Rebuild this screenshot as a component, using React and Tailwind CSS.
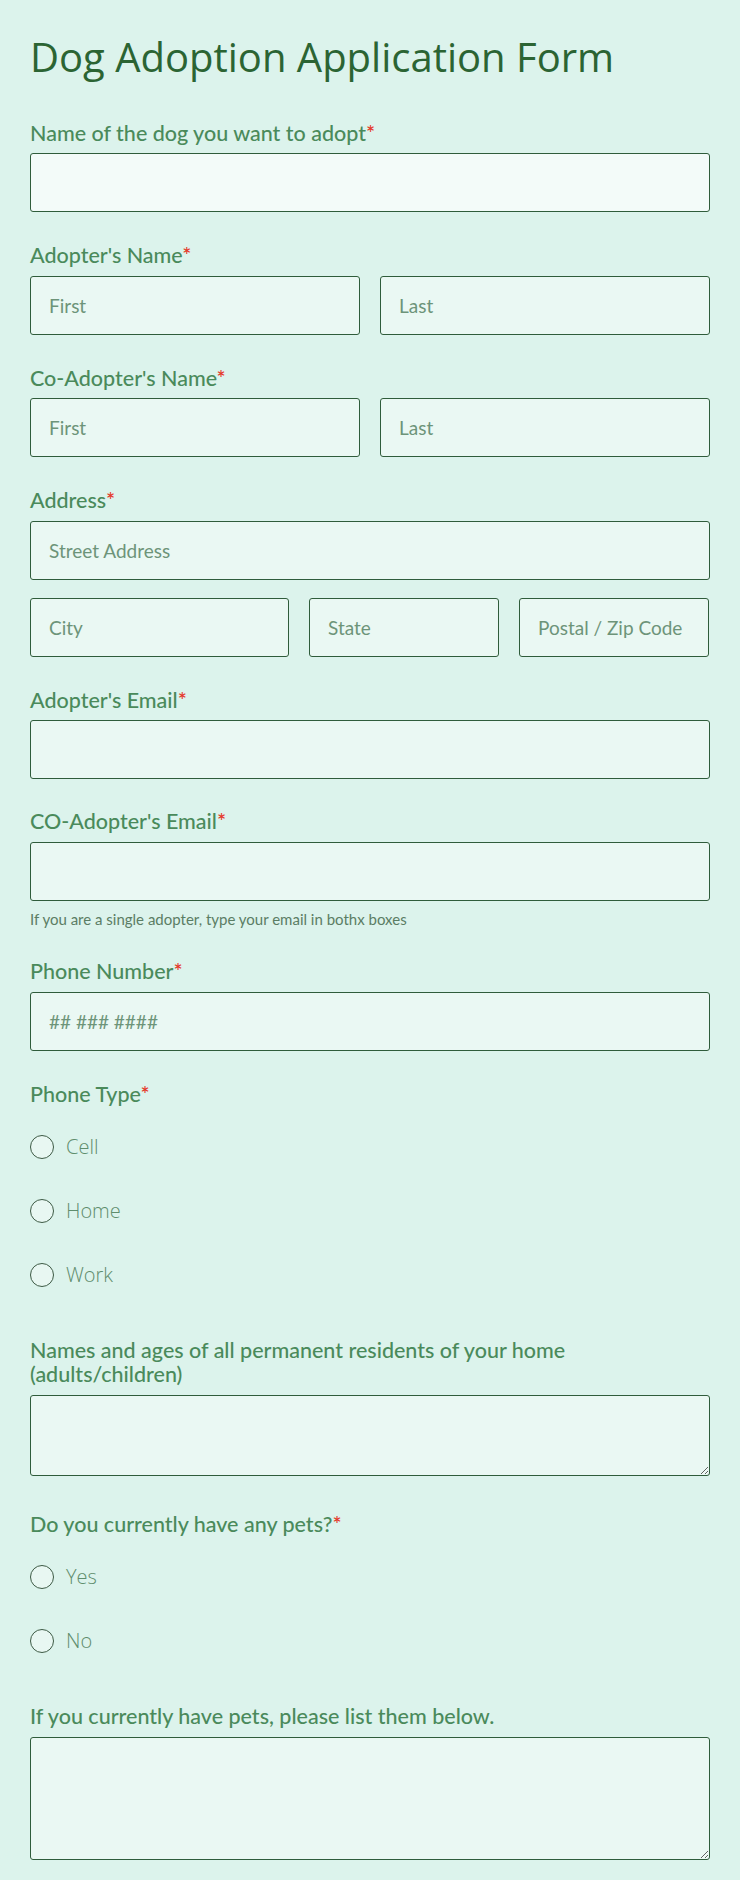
import { useState } from "react";

const labelFont = { fontFamily: "Lato, 'Noto Sans', sans-serif" };

function Label({ children, required }) {
  return (
    <label className="block text-[21.5px] leading-[24px] font-medium text-[#4a8a5b]" style={labelFont}>
      {children}
      {required ? <span className="text-[#e5392b]">*</span> : null}
    </label>
  );
}

function TextInput({ placeholder, className = "", light }) {
  return (
    <input
      type="text"
      placeholder={placeholder}
      className={`h-[59px] w-full rounded-[3px] border border-[#2f5c3b] px-[18px] text-[19px] text-[#2f5c3b] outline-none placeholder:text-[#6d9479] ${
        light ? "bg-[#f3fbf9]" : "bg-[#eaf8f3]"
      } ${className}`}
      style={labelFont}
    />
  );
}

function Radio({ name, value, label, checked, onChange }) {
  return (
    <label className="flex h-[44px] cursor-pointer items-center gap-[12px]">
      <input
        type="radio"
        name={name}
        value={value}
        checked={checked}
        onChange={onChange}
        className="sr-only"
      />
      <span className="flex h-[24px] w-[24px] items-center justify-center rounded-full border border-[#3d5a45] bg-[#e8f7f2]">
        {checked ? <span className="h-[12px] w-[12px] rounded-full bg-[#2f5c3b]" /> : null}
      </span>
      <span className="text-[20px] font-light text-[#5f8d6d]" style={{ fontFamily: "'Open Sans', Lato, sans-serif" }}>
        {label}
      </span>
    </label>
  );
}

export default function App() {
  const [phoneType, setPhoneType] = useState("");
  const [hasPets, setHasPets] = useState("");

  return (
    <main className="min-h-[1880px] bg-[#dcf3ec] px-[30px] pt-[31px] pb-[21px]">
      <h1 className="text-[40px] leading-[52px] text-[#2b6433]" style={{ fontFamily: "'Open Sans', sans-serif" }}>
        Dog Adoption Application Form
      </h1>

      <form className="mt-[38px]" onSubmit={(e) => e.preventDefault()}>
        <div className="flex flex-col gap-[8px]">
          <Label required>Name of the dog you want to adopt</Label>
          <TextInput light />
        </div>

        <div className="mt-[31px] flex flex-col gap-[9px]">
          <Label required>Adopter's Name</Label>
          <div className="grid grid-cols-2 gap-[20px]">
            <TextInput placeholder="First" />
            <TextInput placeholder="Last" />
          </div>
        </div>

        <div className="mt-[31px] flex flex-col gap-[8px]">
          <Label required>Co-Adopter's Name</Label>
          <div className="grid grid-cols-2 gap-[20px]">
            <TextInput placeholder="First" />
            <TextInput placeholder="Last" />
          </div>
        </div>

        <div className="mt-[31px] flex flex-col gap-[9px]">
          <Label required>Address</Label>
          <TextInput placeholder="Street Address" />
          <div className="mt-[9px] grid grid-cols-[259px_190px_190px] gap-[20px]">
            <TextInput placeholder="City" />
            <TextInput placeholder="State" />
            <TextInput placeholder="Postal / Zip Code" />
          </div>
        </div>

        <div className="mt-[31px] flex flex-col gap-[8px]">
          <Label required>Adopter's Email</Label>
          <TextInput />
        </div>

        <div className="mt-[30px] flex flex-col gap-[9px]">
          <Label required>CO-Adopter's Email</Label>
          <TextInput />
          <p className="text-[15px] leading-[18px] text-[#5b7d64]" style={labelFont}>
            If you are a single adopter, type your email in bothx boxes
          </p>
        </div>

        <div className="mt-[31px] flex flex-col gap-[9px]">
          <Label required>Phone Number</Label>
          <TextInput placeholder="## ### ####" />
        </div>

        <div className="mt-[31px]">
          <Label required>Phone Type</Label>
          <div className="mt-[19px] flex flex-col gap-[20px]">
            {["Cell", "Home", "Work"].map((t) => (
              <Radio
                key={t}
                name="phoneType"
                value={t}
                label={t}
                checked={phoneType === t}
                onChange={() => setPhoneType(t)}
              />
            ))}
          </div>
        </div>

        <div className="mt-[41px] flex flex-col gap-[9px]">
          <Label>
            Names and ages of all permanent residents of your home
            <br />
            (adults/children)
          </Label>
          <textarea className="block h-[81px] w-full rounded-[3px] border border-[#2f5c3b] bg-[#eaf8f3] px-[18px] py-[12px] text-[18px] outline-none" />
        </div>

        <div className="mt-[36px]">
          <Label required>Do you currently have any pets?</Label>
          <div className="mt-[19px] flex flex-col gap-[20px]">
            {["Yes", "No"].map((t) => (
              <Radio
                key={t}
                name="pets"
                value={t}
                label={t}
                checked={hasPets === t}
                onChange={() => setHasPets(t)}
              />
            ))}
          </div>
        </div>

        <div className="mt-[41px] flex flex-col gap-[9px]">
          <Label>If you currently have pets, please list them below.</Label>
          <textarea className="block h-[123px] w-full rounded-[3px] border border-[#2f5c3b] bg-[#eaf8f3] px-[18px] py-[12px] text-[18px] outline-none" />
        </div>
      </form>
    </main>
  );
}
